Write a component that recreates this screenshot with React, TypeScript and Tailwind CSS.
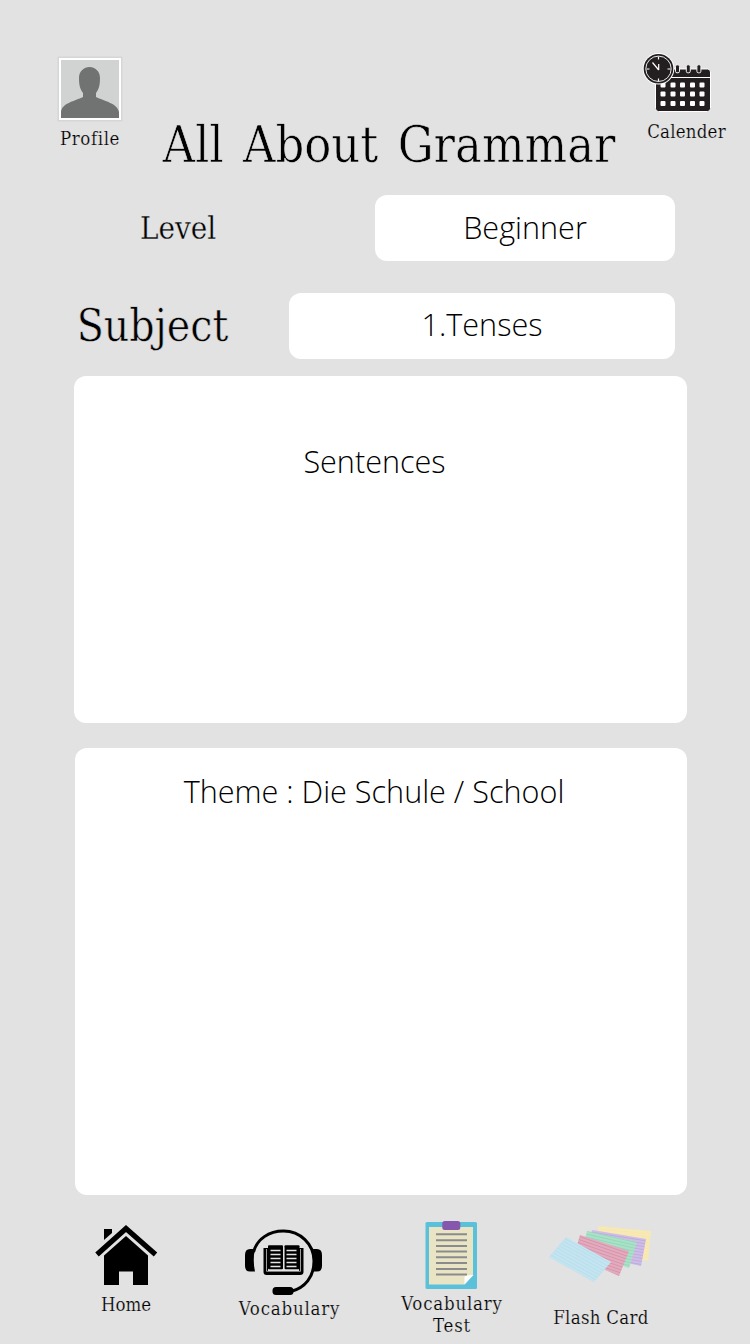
import React from 'react';

const slab = "font-['DejaVu_Serif_Condensed','DejaVu_Serif',serif] [font-stretch:condensed]";
const light = "font-['Open_Sans',sans-serif] [font-stretch:normal] font-light text-[30.600px] leading-[42px] whitespace-nowrap";

function ProfileIcon() {
  return (
    <svg className="h-[66px] w-[66px]" viewBox="0 0 66 66">
      <rect x="0.5" y="0.5" width="65" height="65" fill="#d6d6d6" />
      <rect x="2" y="2" width="62" height="62" fill="#fff" />
      <rect x="4" y="4" width="58" height="58" fill="#d1d3d3" />
      <path d="M4 62V56C5 47 18 45 26 41V37C23 33 22 29 22 22C22 15 27 11 32.500 11C38 11 43 15 43 22C43 29 42 33 39 37V41C47 45 60 47 62 56V62Z" fill="#717373" />
    </svg>
  );
}

function CalendarIcon() {
  const cols = [660.5, 670.5, 680, 690, 699.5];
  const rows = [83, 92, 101.500];
  return (
    <svg className="h-[62px] w-[70px]" viewBox="642 52 70 62">
      <rect x="655.500" y="69" width="55" height="42.500" rx="3" fill="#231f20" stroke="#fff" strokeWidth="1" />
      <path d="M656 77.500H710" stroke="#fff" strokeWidth="1.200" />
      {[677.5, 688.3, 698.9].map((x) => (
        <rect key={x} x={x - 2} y="64.800" width="4" height="8" rx="1.500" fill="#231f20" stroke="#f4f4f4" strokeWidth="1" />
      ))}
      {rows.map((y) => cols.map((x) => <rect key={`${x}-${y}`} x={x} y={y - 0.5} width="5" height="5" rx="1" fill="#fff" />))}
      <circle cx="658.500" cy="68.800" r="15.800" fill="#fff" />
      <circle cx="658.500" cy="68.800" r="14.800" fill="#231f20" />
      <circle cx="658.500" cy="68.800" r="12.700" fill="none" stroke="#fff" strokeWidth="0.900" />
      <path d="M658.500 56.500V59.500M658.500 78.500V81.500M646.500 69H649.500M667.500 69H670.500M658.700 70V64M658.700 70L652.500 62.500" stroke="#fff" strokeWidth="1.200" fill="none" />
    </svg>
  );
}

function HomeIcon() {
  return (
    <svg className="h-[62px] w-[64px]" viewBox="94 1224 64 62">
      <path d="M104 1229H112V1233L104 1240Z" />
      <path d="M97 1254.500L126 1228.500L155.500 1254.500" fill="none" stroke="#000" strokeWidth="5.200" />
      <path d="M126 1236L148 1255.500V1285H133V1271.500H119V1285H104V1255.500Z" />
    </svg>
  );
}

function HeadsetIcon() {
  return (
    <svg className="h-[68px] w-[80px]" viewBox="244 1228 80 68">
      <path d="M253.500 1252C257 1239 269 1231 283.500 1231C300 1231 314 1244 314 1261C314 1277 305 1288 291 1291.500" fill="none" stroke="#000" strokeWidth="3" />
      <path d="M255 1249Q252.500 1260 255 1271.500H250Q245 1271.500 245 1266V1255Q245 1249 250 1249ZM313 1249H317Q322 1249 322 1255V1266Q322 1271.500 317 1271.500H312Q315 1260 313 1249Z" />
      <rect x="272.500" y="1287" width="21" height="8" rx="3.500" />
      <path d="M263.500 1248H268V1271H299V1248H303.500V1272Q303.500 1275 300 1275H266.500Q263.500 1275 263.500 1272Z" />
      <rect x="268" y="1245.300" width="15" height="24" rx="1" />
      <rect x="284.500" y="1245.300" width="15" height="24" rx="1" />
      <path d="M266.500 1249V1271.300H300.500V1249" fill="none" stroke="#e2e2e2" strokeWidth="0.700" />
      <path d="M283.700 1248V1270" stroke="#e2e2e2" strokeWidth="0.700" />
      <path d="M270.500 1250.500H280.500M270.500 1254.500H280.500M270.500 1258.500H280.500M270.500 1262.500H280.500M270.500 1266.500H280.500M286.500 1250.500H296.500M286.500 1254.500H296.500M286.500 1258.500H296.500M286.500 1262.500H296.500M286.500 1266.500H296.500" stroke="#e2e2e2" strokeWidth="1.300" />
    </svg>
  );
}

function ClipboardIcon() {
  return (
    <svg className="h-[70px] w-[54px]" viewBox="424 1220 54 70">
      <rect x="425.500" y="1222" width="51.500" height="67" rx="1.500" fill="#5bc0d9" />
      <path d="M429 1227H473V1275L464.500 1284.500H429Z" fill="#e9e4c4" />
      <path d="M473.500 1275L464.500 1284.500V1277.500Q464.500 1276 466 1275.500Z" fill="#fff" />
      <rect x="442.300" y="1221" width="18" height="9" rx="2.500" fill="#8558ae" />
      <path d="M436 1234.300H467M436 1240.200H467M436 1246H467M436 1251.600H467M436 1257.300H467M436 1263H467M436 1269H467M436 1274.500H467" stroke="#8b8b8d" strokeWidth="2" />
    </svg>
  );
}

const cards = [
  { points: '599,1226 651,1231 648,1261 594,1249', fill: '#fae6a5', angle: 5 },
  { points: '592,1230 646,1239 641,1266 588,1254', fill: '#c2a9e0', angle: 9 },
  { points: '587,1231 637,1242 629,1268 582,1251', fill: '#92d9b7', angle: 13 },
  { points: '580,1235 629,1251 619,1276 574,1256', fill: '#dc91aa', angle: 19 },
  { points: '566,1237 611,1262 594,1282 549,1257', fill: '#b6dfee', angle: 29 },
];

function CardsIcon() {
  return (
    <svg className="h-[60px] w-[106px]" viewBox="548 1224 106 60">
      <defs>
        {cards.map((c) => (
          <pattern key={c.angle} id={`rule-${c.angle}`} width="4" height="3" patternUnits="userSpaceOnUse" patternTransform={`rotate(${c.angle})`}>
            <path d="M0 1H4" stroke="#e8eff2" strokeWidth="0.900" opacity="0.650" />
          </pattern>
        ))}
      </defs>
      {cards.map((c) => (
        <g key={c.angle}>
          <polygon points={c.points} fill={c.fill} />
          <polygon points={c.points} fill={`url(#rule-${c.angle})`} />
        </g>
      ))}
    </svg>
  );
}

export default function App() {
  return (
    <main className={`${slab} flex h-[1344px] w-[750px] flex-col overflow-hidden bg-[#e2e2e2] text-black`}>
      <header className="flex h-[195px] items-start">
        <div className="ml-[45px] flex w-[90px] flex-col items-center pt-[56px] text-[18.500px]">
          <ProfileIcon />
          <span className="mt-[6px] leading-[22px] tracking-[0.600px] [-webkit-text-stroke:0.200px_#e2e2e2]">Profile</span>
        </div>
        <h1 className="w-[508px] pt-[115px] text-center text-[50px] leading-[60px] [word-spacing:5px] whitespace-nowrap [-webkit-text-stroke:0.600px_#e2e2e2]">All About Grammar</h1>
        <div className="flex w-[87px] flex-col items-center pt-[52px] text-[18.500px]">
          <div className="-ml-[19px]"><CalendarIcon /></div>
          <span className="mt-[7px] leading-[22px] tracking-[0.200px] [-webkit-text-stroke:0.200px_#e2e2e2]">Calender</span>
        </div>
      </header>
      <section className="flex h-[66px] items-center">
        <h2 className="ml-[128px] w-[100px] text-center text-[31px] leading-[40px] [-webkit-text-stroke:0.300px_#e2e2e2]">Level</h2>
        <div className={`${light} ml-[147px] flex h-[66px] w-[300px] items-center justify-center rounded-[12px] bg-white pb-[2px]`}>Beginner</div>
      </section>
      <section className="mt-[31.500px] flex h-[66px] items-center">
        <h2 className="ml-[68px] w-[169px] text-center text-[44px] leading-[60px] [-webkit-text-stroke:0.500px_#e2e2e2]">Subject</h2>
        <div className={`${light} ml-[52px] flex h-[66px] w-[386px] items-center justify-center rounded-[12px] bg-white pb-[3px]`}>1.Tenses</div>
      </section>
      <section className={`${light} mt-[17px] ml-[74px] h-[347px] w-[613px] shrink-0 rounded-[12px] bg-white pt-[64px] pr-[12px] text-center`}>Sentences</section>
      <section className={`${light} mt-[25px] ml-[75px] h-[447px] w-[612px] shrink-0 rounded-[12px] bg-white pt-[22px] pr-[14px] text-center`}>Theme : Die Schule / School</section>
      <nav className="flex h-[149px] items-start text-[18.500px] leading-[22px] whitespace-nowrap [-webkit-text-stroke:0.200px_#e2e2e2]">
        <div className="ml-[66px] flex w-[120px] flex-col items-center pt-[29px]"><HomeIcon /><span className="mt-[8px]">Home</span></div>
        <div className="ml-[38px] flex w-[120px] flex-col items-center pt-[33px]"><HeadsetIcon /><span className="mt-[2px] ml-[11px] tracking-[0.800px]">Vocabulary</span></div>
        <div className="ml-[47px] flex w-[120px] flex-col items-center pt-[25px]"><ClipboardIcon /><span className="mt-[3px] ml-[2px] text-center leading-[22.500px] tracking-[0.800px]">Vocabulary<br />Test</span></div>
        <div className="ml-[30px] flex w-[120px] flex-col items-center pt-[29px]"><CardsIcon /><span className="mt-[23px] tracking-[0.300px]">Flash Card</span></div>
      </nav>
    </main>
  );
}
